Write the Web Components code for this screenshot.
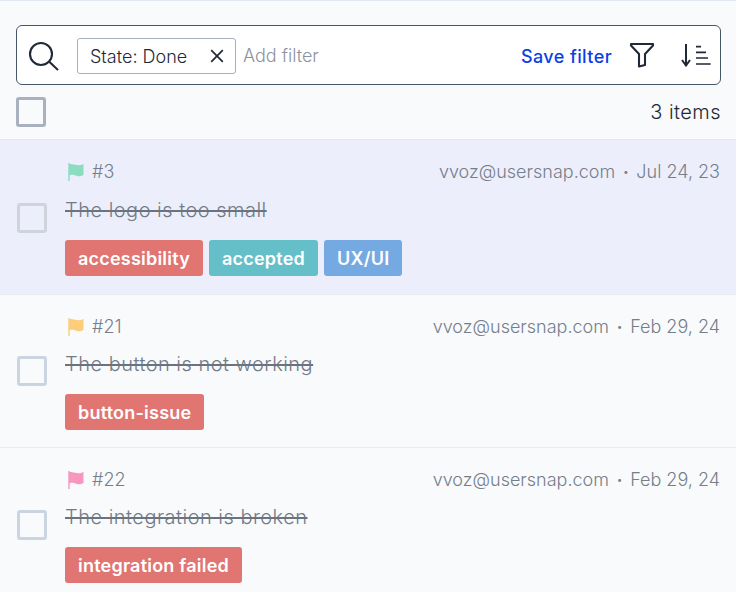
<!DOCTYPE html>
<html>
<head>
<meta charset="utf-8">
<style>
  html, body { margin: 0; height: 100%; overflow: hidden; }
  body { background: #f8fafc; font-family: Inter, sans-serif; color: #1f2937; border-top: 1px solid #e2e8f0; box-sizing: border-box; }
</style>
</head>
<body>
<issue-toolbar count="3 items"></issue-toolbar>
<issue-row num="#3" flag="#8cdcc0" email="vvoz@usersnap.com" date="Jul 24, 23" title="The logo is too small" tags="accessibility:#e17572,accepted:#65bfc9,UX/UI:#74a9e2" active></issue-row>
<issue-row num="#21" flag="#fdcd7c" email="vvoz@usersnap.com" date="Feb 29, 24" title="The button is not working" tags="button-issue:#e17572"></issue-row>
<issue-row num="#22" flag="#f797bd" email="vvoz@usersnap.com" date="Feb 29, 24" title="The integration is broken" tags="integration failed:#e17572" style="--check-top: 42px"></issue-row>

<script>
class IssueCheckbox extends HTMLElement {
    constructor() {
        super();
        this.attachShadow({ mode: 'open' });
        this.shadowRoot.innerHTML = `
            <style>
                :host {
                    display: block;
                    box-sizing: border-box;
                    width: 30px;
                    height: 30px;
                    border: 3px solid var(--check-border, #cbd5e1);
                    border-radius: 3px;
                    flex: none;
                }
            </style>
        `;
    }
}

class FilterChip extends HTMLElement {
    constructor() {
        super();
        this.attachShadow({ mode: 'open' });
        this.shadowRoot.innerHTML = `
            <style>
                :host {
                    display: flex;
                    align-items: center;
                    justify-content: space-between;
                    box-sizing: border-box;
                    width: 159px;
                    height: 36px;
                    margin-top: 2px;
                    padding: 0 11px 0 12px;
                    border: 1px solid #a8b1bd;
                    border-radius: 3px;
                    font-size: 18px;
                    font-weight: 300;
                    color: #1f2937;
                }
                svg { display: block; }
            </style>
            <slot></slot>
            <svg width="14" height="14" viewBox="0 0 14 14" fill="none" stroke="#1f2937" stroke-width="1.7"><path d="M1.200 1.200l11.600 11.600M12.800 1.200L1.200 12.800"/></svg>
        `;
    }
}

class IssueToolbar extends HTMLElement {
    constructor() {
        super();
        this.attachShadow({ mode: 'open' });
        this.shadowRoot.innerHTML = `
            <style>
                :host { display: block; box-sizing: border-box; padding: 24px 15px 0 16px; height: 139px; border-bottom: 1px solid #e5e7eb; }
                .search {
                    display: flex;
                    align-items: center;
                    box-sizing: border-box;
                    height: 60px;
                    padding: 0 9px 0 11px;
                    background: #fff;
                    border: 1px solid #475569;
                    border-radius: 6px;
                }
                .glass { flex: none; display: block; margin: 4px 17px 0 0; }
                .add { margin-left: 7px; flex: 1; font-size: 18px; font-weight: 300; color: #8b939f; }
                .save { font-size: 18px; font-weight: 500; color: #0a3fe6; letter-spacing: .4px; margin: 2px 17px 0 0; }
                .filter { display: block; margin-right: 26px; }
                .sort { display: block; }
                .meta { display: flex; justify-content: space-between; align-items: center; margin-top: 12px; font-size: 20px; font-weight: 300; letter-spacing: .45px; color: #1f2937; --check-border: #a8b1bd; }
            </style>
            <div class="search">
                <svg class="glass" width="32" height="32" viewBox="0 0 32 32" fill="none" stroke="#1f2937" stroke-width="2.1"><circle cx="13" cy="13" r="11"/><path d="M21 20.500l9 8.500"/></svg>
                <filter-chip>State: Done</filter-chip>
                <span class="add">Add filter</span>
                <span class="save">Save filter</span>
                <svg class="filter" width="26" height="26" viewBox="0 0 26 26" fill="none" stroke="#1f2937" stroke-width="2.1" stroke-linejoin="round"><path d="M2 2h22v1.500l-8 8.500v11l-6 1.500V12L2 3.500z"/></svg>
                <svg class="sort" width="30" height="24" viewBox="0 0 30 24" fill="none" stroke="#1f2937" stroke-width="2"><path d="M5 1v22M1 17l4 5.500 4-5.500"/><path stroke-width="1.7" d="M15 3.700h5M15 9.300h10M15 15h12M15 21h14.700"/></svg>
            </div>
            <div class="meta">
                <issue-checkbox></issue-checkbox>
                <span>3 items</span>
            </div>
        `;
    }
}

class IssueRow extends HTMLElement {
    constructor() {
        super();
        this.attachShadow({ mode: 'open' });
    }

    connectedCallback() {
        const tags = this.getAttribute('tags').split(',').map((tag) => {
            const [label, color] = tag.split(':');
            return `<span class="tag" style="background:${color}">${label}</span>`;
        }).join('');
        this.shadowRoot.innerHTML = `
            <style>
                :host { display: flex; align-items: flex-start; box-sizing: border-box; height: 153px; padding: 20px 16px 0 17px; border-bottom: 1px solid #e8ebef; }
                :host([active]) { height: 155px; background: #eceffb; --check-border: #ced3dc; --check-top: 43px; --title-gap: 12px; }
                issue-checkbox { margin-top: var(--check-top, 41px); }
                .body { flex: 1; margin-left: 18px; }
                .top { display: flex; justify-content: space-between; align-items: center; font-size: 18px; font-weight: 300; color: #767e8a; line-height: 24px; }
                .id { display: flex; align-items: center; gap: 8px; padding-left: 3px; }
                .id svg { display: block; }
                .dot { font-size: 11px; margin: 0 7.500px; vertical-align: 2px; }
                .title { margin-top: var(--title-gap, 11px); font-size: 20px; font-weight: 300; letter-spacing: .48px; line-height: 28px; color: #737b86; text-decoration: line-through; text-decoration-thickness: 2px; text-decoration-color: #6b7280; }
                .tags { display: flex; gap: 6px; margin-top: 16px; }
                .tag { display: block; padding: 1px 13px 0; height: 35px; line-height: 35px; border-radius: 3px; color: #fff; font-size: 18px; font-weight: 600; letter-spacing: .22px; }
            </style>
            <issue-checkbox></issue-checkbox>
            <div class="body">
                <div class="top">
                    <span class="id">
                        <svg width="16" height="18" viewBox="0 0 16 18"><path fill="${this.getAttribute('flag')}" d="M.3 0h1.400v1C4 .6 6 1.600 9 2.100c2 .3 4 0 6.500-1.100v11c-2.500 1.200-4.500 1.700-6.500 1-3-1-5-1.500-7.300-.8V18H.3z"/></svg>
                        ${this.getAttribute('num')}
                    </span>
                    <span>${this.getAttribute('email')}<span class="dot">•</span>${this.getAttribute('date')}</span>
                </div>
                <div class="title">${this.getAttribute('title')}</div>
                <div class="tags">${tags}</div>
            </div>
        `;
    }
}

customElements.define('issue-checkbox', IssueCheckbox);
customElements.define('filter-chip', FilterChip);
customElements.define('issue-toolbar', IssueToolbar);
customElements.define('issue-row', IssueRow);
</script>
</body>
</html>
